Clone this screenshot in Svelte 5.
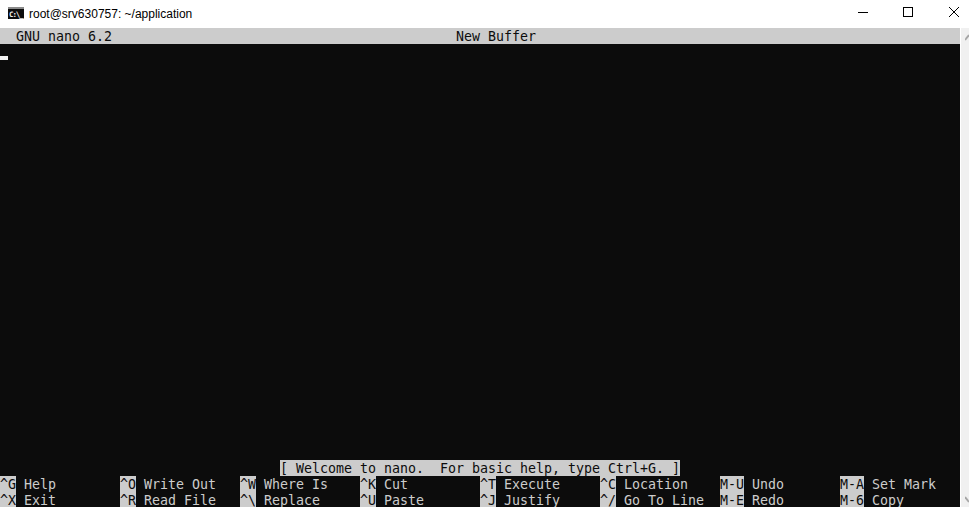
<script>
	const rows = [
		[['^G', 'Help'], ['^O', 'Write Out'], ['^W', 'Where Is'], ['^K', 'Cut'], ['^T', 'Execute'], ['^C', 'Location'], ['M-U', 'Undo'], ['M-A', 'Set Mark']],
		[['^X', 'Exit'], ['^R', 'Read File'], ['^\\', 'Replace'], ['^U', 'Paste'], ['^J', 'Justify'], ['^/', 'Go To Line'], ['M-E', 'Redo'], ['M-6', 'Copy']]
	];
</script>

<div class="window">
	<header class="titlebar">
		<svg class="app-icon" width="16" height="12" viewBox="0 0 16 12">
			<rect width="16" height="12" fill="#0c0c0c" />
			<rect x="0" y="0" width="16" height="2" fill="#8a8a8a" />
			<text x="1" y="9.5" class="icon-text">C:\_</text>
		</svg>
		<span class="title">root@srv630757: ~/application</span>
		<div class="controls">
			<svg width="46" height="28" viewBox="0 0 46 28"><path d="M19 12.5h10" stroke="#000" /></svg>
			<svg width="46" height="28" viewBox="0 0 46 28"><rect x="18.5" y="7.5" width="9" height="9" fill="none" stroke="#000" /></svg>
			<svg width="46" height="28" viewBox="0 0 46 28"><path d="M18 7l10 10M28 7l-10 10" stroke="#000" fill="none" /></svg>
		</div>
	</header>

	<div class="body">
		<main class="terminal">
			<div class="topbar">
				<span class="version">GNU nano 6.2</span>
				<span>New Buffer</span>
			</div>
			<div class="editor"><span class="cursor"></span></div>
			<div class="status"><span>[ Welcome to nano.  For basic help, type Ctrl+G. ]</span></div>
			{#each rows as row}
				<div class="shortcuts">
					{#each row as [key, label]}
						<div class="shortcut"><span class="key">{key}</span><span class="label">{label}</span></div>
					{/each}
				</div>
			{/each}
		</main>
		<div class="scrollbar">
			<svg width="8" height="8" viewBox="0 0 8 8"><path d="M0 7l4-5" stroke="#a6a6a6" stroke-width="2" fill="none" /></svg>
			<svg width="8" height="8" viewBox="0 0 8 8"><path d="M0 1l4 5" stroke="#a6a6a6" stroke-width="2" fill="none" /></svg>
		</div>
	</div>
</div>

<style>
	:global(body) {
		margin: 0;
		overflow: hidden;
		background: #fff;
	}

	.window {
		display: flex;
		flex-direction: column;
		width: 969px;
		height: 507px;
		overflow: hidden;
	}

	.titlebar {
		display: flex;
		align-items: center;
		flex: 0 0 28px;
		padding-left: 8px;
		font: 12px 'Liberation Sans', sans-serif;
		color: #000;
	}

	.app-icon {
		margin-right: 5px;
		margin-bottom: 3px;
	}

	.icon-text {
		font: bold 7.5px 'DejaVu Sans Mono', monospace;
		letter-spacing: -1.1px;
		fill: #f2f2f2;
	}

	.controls {
		display: flex;
		flex-shrink: 0;
		margin-left: auto;
		margin-right: -8px;
	}

	.body {
		display: flex;
		flex: 1;
		min-height: 0;
	}

	.terminal {
		display: flex;
		flex-direction: column;
		flex: 0 0 960px;
		height: 480px;
		background: #0c0c0c;
		color: #ccc;
		font: 13.29px/18px 'DejaVu Sans Mono', monospace;
		white-space: pre;
	}

	.topbar {
		display: flex;
		flex: 0 0 16px;
		min-height: 0;
		padding-left: 16px;
		background: #ccc;
		color: #0c0c0c;
	}

	.version {
		flex: 0 0 440px;
	}

	.editor {
		flex: 1;
		min-height: 0;
	}

	.cursor {
		display: block;
		width: 8px;
		height: 4px;
		margin-top: 12px;
		background: #f2f2f2;
	}

	.status {
		display: flex;
		justify-content: center;
		flex: 0 0 16px;
		min-height: 0;
	}

	.status span {
		background: #ccc;
		color: #0c0c0c;
	}

	.shortcuts {
		display: grid;
		grid-template-columns: repeat(8, 120px);
		grid-template-rows: 16px;
		flex: 0 0 16px;
		min-height: 0;
	}

	.shortcut {
		display: flex;
		min-height: 0;
	}

	.key {
		background: #ccc;
		color: #0c0c0c;
	}

	.label {
		margin-left: 8px;
	}

	.scrollbar {
		display: flex;
		flex-direction: column;
		justify-content: space-between;
		flex: 1;
		margin-left: 1px;
		padding: 5px 0 3px 4px;
		background: #f0f0f0;
		overflow: hidden;
	}
</style>
